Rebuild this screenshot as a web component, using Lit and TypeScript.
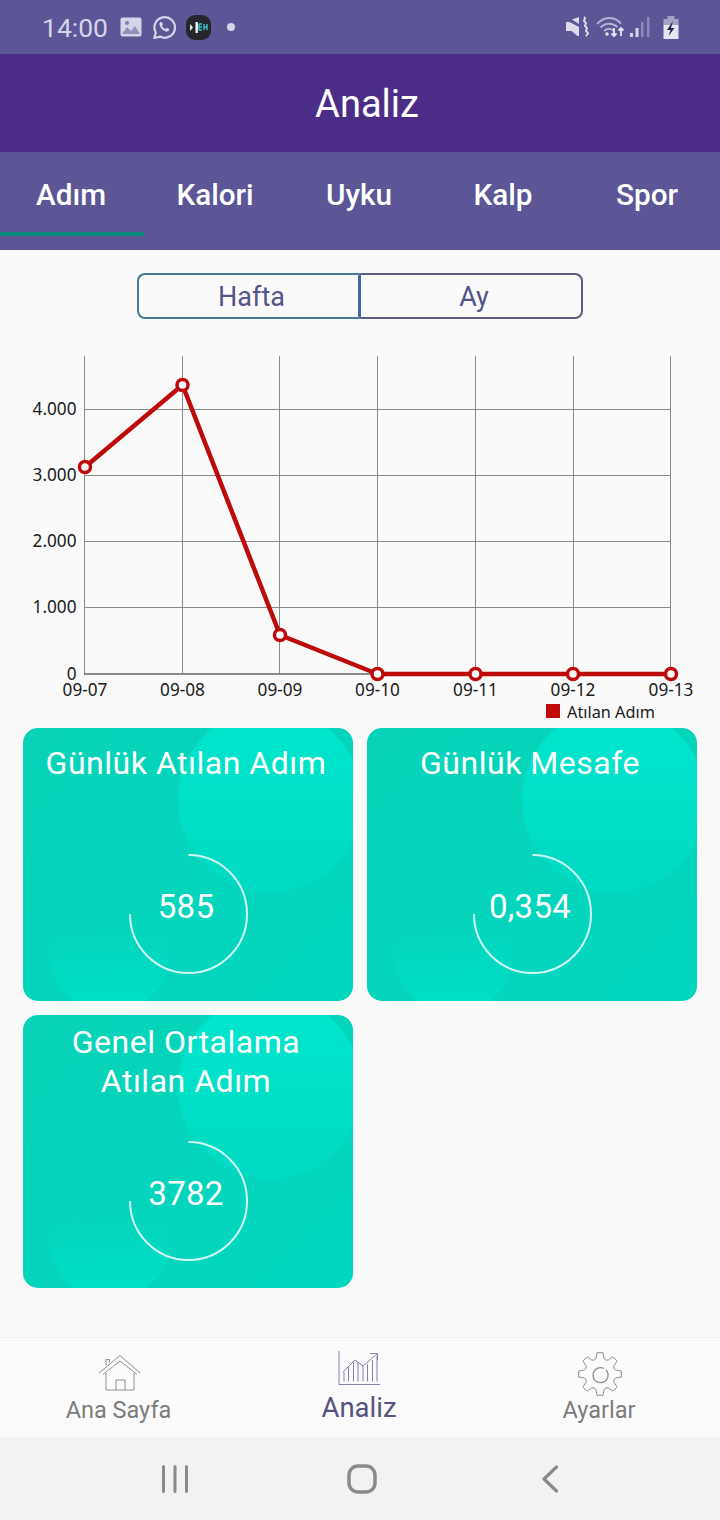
import { LitElement, html, css, svg } from "lit";
import { customElement } from "lit/decorators.js";

function gearPath(cx: number, cy: number, ro: number, ri: number, n: number) {
  const pts: string[] = [];
  const step = (Math.PI * 2) / n;
  for (let i = 0; i < n; i++) {
    const a = i * step - Math.PI / 2;
    const at = (r: number, d: number) =>
      `${(cx + r * Math.cos(a + d * step)).toFixed(1)} ${(cy + r * Math.sin(a + d * step)).toFixed(1)}`;
    pts.push(`${i === 0 ? "M" : "L"}${at(ri, -0.32)}`, `L${at(ro, -0.18)}`, `L${at(ro, 0.18)}`, `L${at(ri, 0.32)}`);
    pts.push(`Q${at(ri - 1.5, 0.5)} ${at(ri, 0.68)}`);
  }
  return pts.join(" ") + "Z";
}

const xs = [85, 182.5, 280, 377.5, 475.5, 573, 671];
const gx = [84.5, 182.5, 279.5, 377.5, 475.5, 573.5, 670.5];
const labels = ["09-07", "09-08", "09-09", "09-10", "09-11", "09-12", "09-13"];
const ys = [467, 385, 635, 674, 674, 674, 674];
const grid = [
  { y: 409.5, t: "4.000" },
  { y: 475.5, t: "3.000" },
  { y: 541.5, t: "2.000" },
  { y: 607.5, t: "1.000" },
  { y: 674, t: "0" },
];

@customElement("app-root")
export class AppRoot extends LitElement {
  static styles = css`
    :host { display: block; width: 720px; height: 1520px; font-family: Roboto, sans-serif; overflow: hidden; background: #fafafa; }
    .page { display: flex; flex-direction: column; height: 1520px; }
    .status { height: 54px; background: #5c5696; display: flex; align-items: center; padding: 0 41px 0 42px; color: #d6d4e9; flex: none; }
    .time { font-size: 26.5px; margin-right: 12px; }
    .status svg { display: block; flex: none; }
    .st-left { display: flex; align-items: center; gap: 10px; }
    .st-dot { margin-left: 5px; }
    .spacer { flex: 1; }
    .st-right { display: flex; align-items: center; }
    .st-wifi { margin-left: 7px; }
    .st-bars { margin-left: 6px; }
    .st-batt { margin-left: 13px; }
    .appbar { height: 98px; flex: none; background: #4b2d87; color: #fff; display: flex; align-items: center; justify-content: center; font-size: 38px; padding: 2px 0 0 14px; box-sizing: border-box; }
    .tabs { height: 98px; flex: none; background: #5c5696; display: grid; grid-template-columns: repeat(5, 144px); }
    .tab { color: #fff; font-size: 29.7px; font-weight: 500; display: flex; align-items: flex-start; justify-content: center; padding: 25px 2px 0 0; box-sizing: border-box; height: 84px; }
    .tab.on { border-bottom: 4px solid #0b8a80; }
    .main { flex: 1; display: flex; flex-direction: column; background: #fafafa; }
    .seg { margin: 23px 0 0 137px; width: 446px; height: 46px; display: grid; grid-template-columns: 224px 222px; box-sizing: border-box; font-size: 27px; color: #55548c; }
    .seg div { display: flex; align-items: center; justify-content: center; box-sizing: border-box; border: 2px solid #4a7798; padding: 2px 0 0 6px; }
    .seg .l { border-radius: 8px 0 0 8px; border-right: 3px solid #4667a6; }
    .seg .r { border-radius: 0 8px 8px 0; border-color: #5d5a82; border-left: 0; }
    .chart { display: block; margin-top: 0; flex: none; }
    .chart text { font-family: "Noto Sans", sans-serif; font-size: 17.2px; fill: #1b1b1b; }
    .chart text.leg { font-size: 16.3px; }
    .cards { display: grid; grid-template-columns: 330px 330px; gap: 14px; padding: 0 23px; }
    .card { position: relative; overflow: hidden; height: 273px; border-radius: 15px; background: linear-gradient(135deg, #08d3b8, #00d7bf); color: #fff; display: flex; flex-direction: column; align-items: center; }
    .blob { position: absolute; border-radius: 50%; }
    .b1 { left: 155px; top: -20px; width: 184px; height: 184px; background: linear-gradient(180deg, #00e5cc 15%, #00dac2); }
    .b2 { left: 27px; top: 165px; width: 120px; height: 120px; background: linear-gradient(180deg, rgba(0,224,200,0) 30%, #00dfc7 92%); }
    .title { position: relative; font-size: 32px; line-height: 39px; text-align: center; padding: 16px 4px 0 0; letter-spacing: 0.52px; }
    .title.two { padding-top: 8px; }
    .ring { position: relative; margin-top: auto; margin-bottom: 27px; width: 120px; height: 120px; display: grid; place-items: center; }
    .ring svg { grid-area: 1 / 1; display: block; }
    .val { grid-area: 1 / 1; font-size: 33px; padding: 0 4px 16px 0; letter-spacing: 0.3px; }
    .nav { height: 100px; flex: none; background: #fbfbfb; border-top: 1px solid #f1f1f1; box-sizing: border-box; display: grid; grid-template-columns: repeat(3, 240px); }
    .item { display: flex; flex-direction: column; align-items: center; color: #7c7c7c; font-size: 23.5px; }
    .item svg { display: block; }
    .item span { line-height: 26px; margin-right: 2px; }
    .home svg { margin: 16px 2px 0 0; }
    .home span { margin: 5px 3px 0 0; }
    .gear svg { margin-top: 14px; }
    .gear span { margin-top: 1px; }
    .item.on { color: #55527f; font-size: 27.5px; }
    .item.on svg { margin-top: 12px; }
    .item.on span { line-height: 30px; margin-top: 6px; }
    .sys { height: 83px; flex: none; background: #f2f2f2; display: flex; align-items: center; padding-left: 162px; }
    .sys svg { display: block; flex: none; }
    .sys-home { margin-left: 159px; }
    .sys-back { margin-left: 164px; }
  `;

  private statusLeft() {
    return html`<div class="st-left">
      <svg width="22" height="20" viewBox="0 0 22 20"><rect x="0.5" y="0.5" width="21" height="19" rx="2" fill="#d6d4e9"/><path d="M2 17l5-7 4 4 4-5 5 8z" fill="#5c5696" opacity=".55"/><circle cx="7" cy="6" r="2" fill="#5c5696" opacity=".7"/></svg>
      <svg width="24" height="25" viewBox="0 0 24 25" fill="none"><path d="M2.3 23l1.5-5.4A10.3 10.3 0 1 1 8 21.6z" stroke="#d6d4e9" stroke-width="2.2" stroke-linejoin="round"/><path d="M8.4 7c-.9.8-1.2 2-.7 3.5 1 2.9 3 5 6 6 1.3.4 2.600 0 3.200-1l.2-1.400-2.500-1.300-1.100 1.300c-1.500-.6-2.800-1.900-3.500-3.500l1-1.100-1.100-2.600z" fill="#d6d4e9"/></svg>
      <svg width="25" height="25" viewBox="0 0 25 25"><rect width="25" height="25" rx="9" fill="#26262c"/><path d="M4 9l3 3.500-3 3.500z" fill="#eee"/><rect x="9.500" y="7" width="2.400" height="11" fill="#f4f4f4"/><path d="M13 9v6M13 9h3M13 15h3M13 12h3M18 9v6M21 9v6M18 12h3" stroke="#35c9c9" stroke-width="1.400" fill="none"/></svg>
      <svg class="st-dot" width="10" height="10" viewBox="0 0 10 10"><circle cx="5" cy="5" r="4" fill="#d6d4e9"/></svg>
    </div>`;
  }

  private statusRight() {
    return html`<div class="st-right">
      <svg width="24" height="24" viewBox="0 0 24 24" fill="none"><path d="M1 7h3.500L14 12v9h-1.500L6.500 16H1z" fill="#dcdaec"/><path d="M7 4.500L14 2v7z" fill="#dcdaec"/><path d="M19 2c3 2-2 3 1 5s-2 3 1 5-2 3 1 5-2 3 0 4" stroke="#dcdaec" stroke-width="2"/></svg>
      <svg class="st-wifi" width="28" height="22" viewBox="0 0 28 22" fill="none"><path d="M1 8c7-8 17-8 24-.5M4.500 11.500c5-5 12-5 17-.5M8 15c3-3 7-3 10 0" stroke="#b5b2d4" stroke-width="2"/><circle cx="11" cy="18" r="1.800" fill="#e2e0f0"/><path d="M18 12v8m-2.500-2.500L18 20l2.500-2.500" stroke="#e8e7f3" stroke-width="1.800"/><path d="M25 20v-8m-2.500 2.500L25 12l2.500 2.500" stroke="#e8e7f3" stroke-width="1.800"/></svg>
      <svg class="st-bars" width="20" height="22" viewBox="0 0 20 22"><rect x="0" y="17" width="3" height="4" fill="#d6d4e9"/><rect x="5.500" y="12" width="3" height="9" fill="#d6d4e9"/><rect x="11" y="6" width="2.500" height="15" fill="#8d89ba"/><rect x="17" y="1" width="2.500" height="20" fill="#8d89ba"/></svg>
      <svg class="st-batt" width="16" height="23" viewBox="0 0 16 23"><rect x="4.500" y="0" width="7" height="3" fill="#a5a2c9"/><rect x="0.500" y="3" width="15" height="6" fill="#a5a2c9"/><rect x="0.500" y="9" width="15" height="14" fill="#e6e5f2"/><path d="M10 5L4 14h3.500L5.500 20l6-8H8z" fill="#26243f"/></svg>
    </div>`;
  }

  private chart() {
    const top = 319;
    const pts = xs.map((x, i) => `${x},${ys[i] - top}`).join(" ");
    return html`<svg class="chart" width="720" height="409" viewBox="0 0 720 409">
      ${gx.map((x) => svg`<line x1=${x} x2=${x} y1=${356 - top} y2=${674 - top} stroke="#8a8a8a" stroke-width="1"/>`)}
      ${grid.map((g) => svg`<line x1="84" x2="671" y1=${g.y - top} y2=${g.y - top} stroke="#8a8a8a" stroke-width=${g.t === "0" ? 2 : 1}/>`)}
      ${grid.map((g) => svg`<text x="76.500" y=${g.y - top + 5.5} text-anchor="end">${g.t}</text>`)}
      ${labels.map((l, i) => svg`<text x=${xs[i]} y=${696 - top} text-anchor="middle">${l}</text>`)}
      <polyline points=${pts} fill="none" stroke="#bd0b0b" stroke-width="4.500" stroke-linejoin="round"/>
      ${xs.map((x, i) => svg`<circle cx=${x} cy=${ys[i] - top} r="5.500" fill="#fafafa" stroke="#bd0b0b" stroke-width="3.500"/>`)}
      <rect x="546" y=${704 - top} width="14" height="14" fill="#c10a0a"/>
      <text class="leg" x="567" y=${718 - top}>Atılan Adım</text>
    </svg>`;
  }

  private card(title: unknown, value: string, two = false) {
    return html`<div class="card">
      <div class="blob b1"></div>
      <div class="blob b2"></div>
      <div class="title ${two ? "two" : ""}">${title}</div>
      <div class="ring">
        <svg width="120" height="120" viewBox="0 0 120 120" fill="none"><path d="M60.500 1A58.500 59 0 1 1 2 60" stroke="#fff" stroke-opacity=".82" stroke-width="2"/></svg>
        <div class="val">${value}</div>
      </div>
    </div>`;
  }

  render() {
    const bars = [344, 348.5, 353.5, 358, 363, 367.5, 372.5, 377];
    const tops = [1372, 1367, 1362, 1362, 1366, 1364, 1360, 1356];
    return html`<div class="page">
      <div class="status"><span class="time">14:00</span>${this.statusLeft()}<span class="spacer"></span>${this.statusRight()}</div>
      <div class="appbar">Analiz</div>
      <div class="tabs">
        <div class="tab on">Adım</div><div class="tab">Kalori</div><div class="tab">Uyku</div><div class="tab">Kalp</div><div class="tab">Spor</div>
      </div>
      <div class="main">
        <div class="seg"><div class="l">Hafta</div><div class="r">Ay</div></div>
        ${this.chart()}
        <div class="cards">
          ${this.card("Günlük Atılan Adım", "585")}
          ${this.card("Günlük Mesafe", "0,354")}
          ${this.card(html`Genel Ortalama<br />Atılan Adım`, "3782", true)}
        </div>
      </div>
      <div class="nav">
        <div class="item home">
          <svg width="44" height="38" viewBox="97 1354 44 38" fill="none" stroke="#8f8f8f" stroke-width="1"><path d="M99 1373L120 1355.500 140 1373M103 1374.500L120 1361 137 1374.500M106 1359.500v5.500M109.500 1359.500v3M106 1359.500h3.500M106 1373v17h28v-17M116 1390v-10h9v10"/></svg>
          <span>Ana Sayfa</span>
        </div>
        <div class="item on">
          <svg width="44" height="37" viewBox="338 1350 44 37" fill="none" stroke="#8583a8" stroke-width="1"><path d="M339 1351v33.500h41"/><path d="M343 1372l12-12 8 6 14-12M370 1353.500h7.500v7"/>${bars.map((x, i) => svg`<path d="M${x} ${tops[i]}V1381.500"/>`)}</svg>
          <span>Analiz</span>
        </div>
        <div class="item gear">
          <svg width="46" height="44" viewBox="577 1352 46 44" fill="none" stroke="#8f8f8f" stroke-width="1"><path d=${gearPath(600, 1374, 21.5, 16, 8)}/><path d="M606 1370a7.500 7.500 0 1 1-2-1.500" stroke-width="1.300"/></svg>
          <span>Ayarlar</span>
        </div>
      </div>
      <div class="sys">
        <svg width="26" height="28" viewBox="0 0 26 28" fill="#8a8a8a"><rect x="0" y="0" width="3" height="28" rx="1.500"/><rect x="11.500" y="0" width="3" height="28" rx="1.500"/><rect x="23" y="0" width="3" height="28" rx="1.500"/></svg>
        <svg class="sys-home" width="30" height="30" viewBox="0 0 30 30" fill="none"><rect x="2" y="2" width="26" height="26" rx="9" stroke="#8a8a8a" stroke-width="3.500"/></svg>
        <svg class="sys-back" width="18" height="28" viewBox="0 0 18 28" fill="none"><path d="M15.500 2L3 14l12.500 12" stroke="#8a8a8a" stroke-width="3.200" stroke-linecap="round" stroke-linejoin="round"/></svg>
      </div>
    </div>`;
  }
}
